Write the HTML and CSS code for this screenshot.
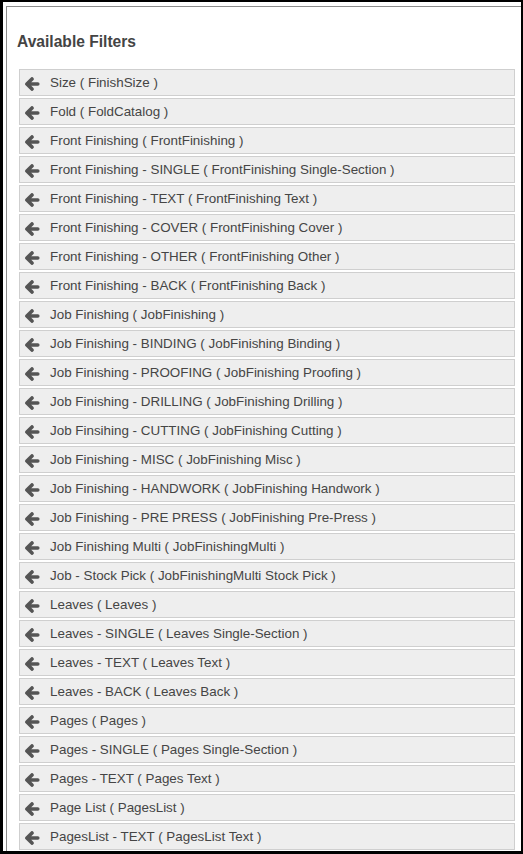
FILE: index.html
```html
<!DOCTYPE html>
<html>
<head>
<meta charset="utf-8">
<link rel="stylesheet" href="styles.css">
</head>
<body>
<div class="frame">
  <div class="panel">
    <h2 class="title">Available Filters</h2>
    <ul class="filters">
      <li class="filter"><svg class="arrow" viewBox="0 0 16 14"><path d="M8 1.9 L2.9 7 L8 12.1 M3 7 H13.8"/></svg><span>Size ( FinishSize )</span></li>
      <li class="filter"><svg class="arrow" viewBox="0 0 16 14"><path d="M8 1.9 L2.9 7 L8 12.1 M3 7 H13.8"/></svg><span>Fold ( FoldCatalog )</span></li>
      <li class="filter"><svg class="arrow" viewBox="0 0 16 14"><path d="M8 1.9 L2.9 7 L8 12.1 M3 7 H13.8"/></svg><span>Front Finishing ( FrontFinishing )</span></li>
      <li class="filter"><svg class="arrow" viewBox="0 0 16 14"><path d="M8 1.9 L2.9 7 L8 12.1 M3 7 H13.8"/></svg><span>Front Finishing - SINGLE ( FrontFinishing Single-Section )</span></li>
      <li class="filter"><svg class="arrow" viewBox="0 0 16 14"><path d="M8 1.9 L2.9 7 L8 12.1 M3 7 H13.8"/></svg><span>Front Finishing - TEXT ( FrontFinishing Text )</span></li>
      <li class="filter"><svg class="arrow" viewBox="0 0 16 14"><path d="M8 1.9 L2.9 7 L8 12.1 M3 7 H13.8"/></svg><span>Front Finishing - COVER ( FrontFinishing Cover )</span></li>
      <li class="filter"><svg class="arrow" viewBox="0 0 16 14"><path d="M8 1.9 L2.9 7 L8 12.1 M3 7 H13.8"/></svg><span>Front Finishing - OTHER ( FrontFinishing Other )</span></li>
      <li class="filter"><svg class="arrow" viewBox="0 0 16 14"><path d="M8 1.9 L2.9 7 L8 12.1 M3 7 H13.8"/></svg><span>Front Finishing - BACK ( FrontFinishing Back )</span></li>
      <li class="filter"><svg class="arrow" viewBox="0 0 16 14"><path d="M8 1.9 L2.9 7 L8 12.1 M3 7 H13.8"/></svg><span>Job Finishing ( JobFinishing )</span></li>
      <li class="filter"><svg class="arrow" viewBox="0 0 16 14"><path d="M8 1.9 L2.9 7 L8 12.1 M3 7 H13.8"/></svg><span>Job Finishing - BINDING ( JobFinishing Binding )</span></li>
      <li class="filter"><svg class="arrow" viewBox="0 0 16 14"><path d="M8 1.9 L2.9 7 L8 12.1 M3 7 H13.8"/></svg><span>Job Finishing - PROOFING ( JobFinishing Proofing )</span></li>
      <li class="filter"><svg class="arrow" viewBox="0 0 16 14"><path d="M8 1.9 L2.9 7 L8 12.1 M3 7 H13.8"/></svg><span>Job Finishing - DRILLING ( JobFinishing Drilling )</span></li>
      <li class="filter"><svg class="arrow" viewBox="0 0 16 14"><path d="M8 1.9 L2.9 7 L8 12.1 M3 7 H13.8"/></svg><span>Job Finsihing - CUTTING ( JobFinishing Cutting )</span></li>
      <li class="filter"><svg class="arrow" viewBox="0 0 16 14"><path d="M8 1.9 L2.9 7 L8 12.1 M3 7 H13.8"/></svg><span>Job Finishing - MISC ( JobFinishing Misc )</span></li>
      <li class="filter"><svg class="arrow" viewBox="0 0 16 14"><path d="M8 1.9 L2.9 7 L8 12.1 M3 7 H13.8"/></svg><span>Job Finishing - HANDWORK ( JobFinishing Handwork )</span></li>
      <li class="filter"><svg class="arrow" viewBox="0 0 16 14"><path d="M8 1.9 L2.9 7 L8 12.1 M3 7 H13.8"/></svg><span>Job Finishing - PRE PRESS ( JobFinishing Pre-Press )</span></li>
      <li class="filter"><svg class="arrow" viewBox="0 0 16 14"><path d="M8 1.9 L2.9 7 L8 12.1 M3 7 H13.8"/></svg><span>Job Finishing Multi ( JobFinishingMulti )</span></li>
      <li class="filter"><svg class="arrow" viewBox="0 0 16 14"><path d="M8 1.9 L2.9 7 L8 12.1 M3 7 H13.8"/></svg><span>Job - Stock Pick ( JobFinishingMulti Stock Pick )</span></li>
      <li class="filter"><svg class="arrow" viewBox="0 0 16 14"><path d="M8 1.9 L2.9 7 L8 12.1 M3 7 H13.8"/></svg><span>Leaves ( Leaves )</span></li>
      <li class="filter"><svg class="arrow" viewBox="0 0 16 14"><path d="M8 1.9 L2.9 7 L8 12.1 M3 7 H13.8"/></svg><span>Leaves - SINGLE ( Leaves Single-Section )</span></li>
      <li class="filter"><svg class="arrow" viewBox="0 0 16 14"><path d="M8 1.9 L2.9 7 L8 12.1 M3 7 H13.8"/></svg><span>Leaves - TEXT ( Leaves Text )</span></li>
      <li class="filter"><svg class="arrow" viewBox="0 0 16 14"><path d="M8 1.9 L2.9 7 L8 12.1 M3 7 H13.8"/></svg><span>Leaves - BACK ( Leaves Back )</span></li>
      <li class="filter"><svg class="arrow" viewBox="0 0 16 14"><path d="M8 1.9 L2.9 7 L8 12.1 M3 7 H13.8"/></svg><span>Pages ( Pages )</span></li>
      <li class="filter"><svg class="arrow" viewBox="0 0 16 14"><path d="M8 1.9 L2.9 7 L8 12.1 M3 7 H13.8"/></svg><span>Pages - SINGLE ( Pages Single-Section )</span></li>
      <li class="filter"><svg class="arrow" viewBox="0 0 16 14"><path d="M8 1.9 L2.9 7 L8 12.1 M3 7 H13.8"/></svg><span>Pages - TEXT ( Pages Text )</span></li>
      <li class="filter"><svg class="arrow" viewBox="0 0 16 14"><path d="M8 1.9 L2.9 7 L8 12.1 M3 7 H13.8"/></svg><span>Page List ( PagesList )</span></li>
      <li class="filter"><svg class="arrow" viewBox="0 0 16 14"><path d="M8 1.9 L2.9 7 L8 12.1 M3 7 H13.8"/></svg><span>PagesList - TEXT ( PagesList Text )</span></li>
    </ul>
  </div>
</div>
</body>
</html>
```
FILE: styles.css
```css
html, body {
  margin: 0;
  padding: 0;
  background: #fff;
}
.frame {
  box-sizing: border-box;
  width: 523px;
  height: 854px;
  border-style: solid;
  border-color: #000;
  border-width: 2px 2px 3px 3px;
  background: #fff;
  overflow: hidden;
  padding: 4px 0 0 3px;
  font-family: "Liberation Sans", Arial, sans-serif;
}
.panel {
  border-top: 1px solid #8c8c8c;
  border-left: 1px solid #8c8c8c;
  padding: 26px 6px 0 12px;
  height: 100%;
  box-sizing: border-box;
}
.title {
  margin: 0 0 18px -2px;
  font-size: 15.6px;
  line-height: 18px;
  font-weight: bold;
  color: #444;
}
.filters {
  list-style: none;
  margin: 0;
  padding: 0;
  display: flex;
  flex-direction: column;
  gap: 2px;
}
.filter {
  display: flex;
  align-items: center;
  height: 27px;
  box-sizing: border-box;
  border: 1px solid #cfcfcf;
  background: #eeeeee;
  padding-left: 4px;
  font-size: 13.4px;
  color: #454545;
  white-space: nowrap;
}
.arrow {
  width: 16px;
  height: 14px;
  margin-top: 3px;
  margin-right: 10px;
  flex: none;
  fill: none;
  stroke: #555;
  stroke-width: 3.6;
  stroke-linecap: round;
  stroke-linejoin: round;
}
```
